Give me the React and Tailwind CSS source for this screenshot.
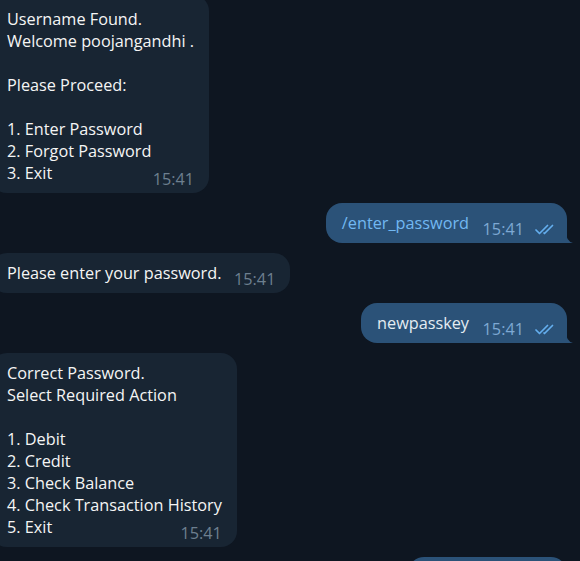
function Checks() {
  return (
    <svg width="21" height="11" viewBox="0 0 21 11" fill="none" stroke="#64aeee" strokeWidth="1.7" strokeLinecap="round" strokeLinejoin="round">
      <path d="M1 6 L4.5 9.5 L12.5 1.5" />
      <path d="M9 9 L9.5 9.5 L17.5 1.5" />
    </svg>
  )
}

function Incoming({ text, className = '' }) {
  return (
    <div className={`relative self-start -ml-[9px] pl-4 pr-[15px] pt-[9px] pb-[9px] rounded-[16px] bg-[#182533] text-[#f5f5f5] ${className}`}>
      <span className="whitespace-pre-line">{text}</span>
      <span className="inline-block w-[54px]" />
      <span className="absolute right-[15px] bottom-[4px] text-[16.25px] leading-[20px] text-[#6d7f8f]">15:41</span>
    </div>
  )
}

function Outgoing({ text, link }) {
  return (
    <div className="relative self-end mr-[13px] pl-4 pr-[11px] pt-[9px] pb-[9px] rounded-[16px] rounded-br-none bg-[#2b5278]">
      <span className={link ? 'text-[#72b8f2]' : 'text-[#e4ecf2]'}>{text}</span>
      <span className="inline-block w-[87px]" />
      <div className="absolute right-[11px] bottom-[4px] flex items-center gap-[11px]">
        <span className="text-[16.25px] leading-[20px] text-[#7da8d3]">15:41</span>
        <Checks />
      </div>
      {/* tail */}
      <svg className="absolute -right-[6px] bottom-0" width="7" height="11" viewBox="0 0 7 11">
        <path d="M0 0 Q0 9 7 11 L0 11 Z" fill="#2b5278" />
      </svg>
    </div>
  )
}

export default function App() {
  return (
    <div
      className="h-[561px] w-[580px] overflow-hidden bg-[#0e1621] flex flex-col gap-[10px] text-[16.25px] leading-[22px]"
      style={{ fontFamily: '"Open Sans", "Noto Sans", sans-serif' }}
    >
      <Incoming
        className="-mt-[5px] pt-[13px]"
        text={'Username Found.\nWelcome poojangandhi .\n\nPlease Proceed:\n\n1. Enter Password\n2. Forgot Password\n3. Exit'}
      />
      <Outgoing text="/enter_password" link />
      <Incoming text="Please enter your password." />
      <Outgoing text="newpasskey" />
      <Incoming
        text={'Correct Password.\nSelect Required Action\n\n1. Debit\n2. Credit\n3. Check Balance\n4. Check Transaction History\n5. Exit'}
      />
      <Outgoing text="/debit" link />
    </div>
  )
}
